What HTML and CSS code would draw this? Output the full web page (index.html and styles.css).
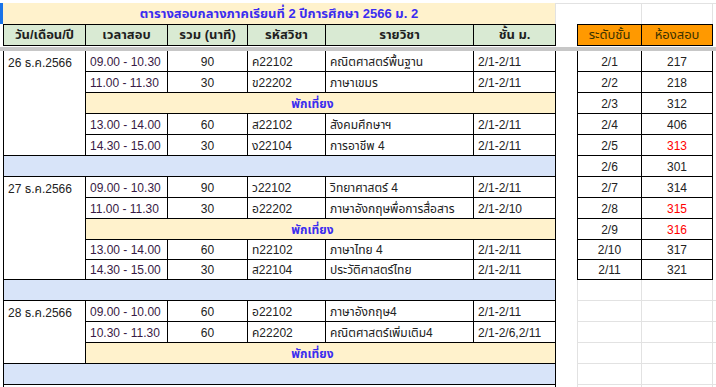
FILE: index.html
```html
<!DOCTYPE html>
<html lang="th">
<head>
<meta charset="utf-8">
<title>ตารางสอบกลางภาค</title>
<link rel="stylesheet" href="styles.css">
</head>
<body>
<div class="sheet">
  <div class="selbar"></div>
  <div class="band head-band">
    <table class="grid left">
      <colgroup><col class="c1"><col class="c2"><col class="c3"><col class="c4"><col class="c5"><col class="c6"></colgroup>
      <tr class="r-title"><td colspan="6" class="title">ตารางสอบกลางภาคเรียนที่ 2 ปีการศึกษา 2566 ม. 2</td></tr>
      <tr class="r-head">
        <th class="first">วัน/เดือน/ปี</th><th>เวลาสอบ</th><th>รวม (นาที)</th><th>รหัสวิชา</th><th>รายวิชา</th><th>ชั้น ม.</th>
      </tr>
    </table>
    <div class="gapcol"></div>
    <div class="rhead">
      <div class="rblank"><span class="g1"></span><span class="g2"></span><span class="g3"></span></div>
      <table class="grid right">
        <colgroup><col class="rc1"><col class="rc2"></colgroup>
        <tr class="r-head"><th class="first orange">ระดับชั้น</th><th class="orange">ห้องสอบ</th></tr>
      </table>
    </div>
  </div>
  <div class="freeze"></div>
  <div class="band body-band">
    <table class="grid left">
      <colgroup><col class="c1"><col class="c2"><col class="c3"><col class="c4"><col class="c5"><col class="c6"></colgroup>
      <tr class="h21"><td rowspan="5" class="first date">26 ธ.ค.2566</td><td class="time">09.00 - 10.30</td><td class="ctr">90</td><td>ค22102</td><td>คณิตศาสตร์พื้นฐาน</td><td>2/1-2/11</td></tr>
      <tr class="h21"><td class="time">11.00 - 11.30</td><td class="ctr">30</td><td>ข22202</td><td>ภาษาเขมร</td><td>2/1-2/11</td></tr>
      <tr class="h21"><td colspan="5" class="lunch">พักเที่ยง</td></tr>
      <tr class="h21"><td class="time">13.00 - 14.00</td><td class="ctr">60</td><td>ส22102</td><td>สังคมศึกษาฯ</td><td>2/1-2/11</td></tr>
      <tr class="h21"><td class="time">14.30 - 15.00</td><td class="ctr">30</td><td>ง22104</td><td>การอาชีพ 4</td><td>2/1-2/11</td></tr>
      <tr class="h21"><td colspan="6" class="first sep"></td></tr>
      <tr class="h21"><td rowspan="5" class="first date">27 ธ.ค.2566</td><td class="time">09.00 - 10.30</td><td class="ctr">90</td><td>ว22102</td><td>วิทยาศาสตร์ 4</td><td>2/1-2/11</td></tr>
      <tr class="h21"><td class="time">11.00 - 11.30</td><td class="ctr">30</td><td>อ22202</td><td>ภาษาอังกฤษพื่อการสื่อสาร</td><td>2/1-2/10</td></tr>
      <tr class="h21"><td colspan="5" class="lunch">พักเที่ยง</td></tr>
      <tr class="h20"><td class="time">13.00 - 14.00</td><td class="ctr">60</td><td>ท22102</td><td>ภาษาไทย 4</td><td>2/1-2/11</td></tr>
      <tr class="h20"><td class="time">14.30 - 15.00</td><td class="ctr">30</td><td>ส22104</td><td>ประวัติศาสตร์ไทย</td><td>2/1-2/11</td></tr>
      <tr class="h21"><td colspan="6" class="first sep"></td></tr>
      <tr class="h21"><td rowspan="3" class="first date">28 ธ.ค.2566</td><td class="time">09.00 - 10.00</td><td class="ctr">60</td><td>อ22102</td><td>ภาษาอังกฤษ4</td><td>2/1-2/11</td></tr>
      <tr class="h21"><td class="time">10.30 - 11.30</td><td class="ctr">60</td><td>ค22202</td><td>คณิตศาสตร์เพิ่มเติม4</td><td>2/1-2/6,2/11</td></tr>
      <tr class="h21"><td colspan="5" class="lunch">พักเที่ยง</td></tr>
      <tr class="h21"><td colspan="6" class="first sep"></td></tr>
      <tr class="h21"><td colspan="6" class="first"></td></tr>
    </table>
    <div class="gapcol"></div>
    <div class="rbody">
      <table class="grid right">
        <colgroup><col class="rc1"><col class="rc2"></colgroup>
        <tr class="h21"><td class="first ctr">2/1</td><td class="ctr">217</td></tr>
        <tr class="h21"><td class="first ctr">2/2</td><td class="ctr">218</td></tr>
        <tr class="h21"><td class="first ctr">2/3</td><td class="ctr">312</td></tr>
        <tr class="h21"><td class="first ctr">2/4</td><td class="ctr">406</td></tr>
        <tr class="h21"><td class="first ctr">2/5</td><td class="ctr red">313</td></tr>
        <tr class="h21"><td class="first ctr">2/6</td><td class="ctr">301</td></tr>
        <tr class="h21"><td class="first ctr">2/7</td><td class="ctr">314</td></tr>
        <tr class="h21"><td class="first ctr">2/8</td><td class="ctr red">315</td></tr>
        <tr class="h21"><td class="first ctr">2/9</td><td class="ctr red">316</td></tr>
        <tr class="h20"><td class="first ctr">2/10</td><td class="ctr">317</td></tr>
        <tr class="h20"><td class="first ctr">2/11</td><td class="ctr">321</td></tr>
      </table>
      <table class="filler">
        <colgroup><col class="rc1"><col class="rc2"><col class="rc3"></colgroup>
        <tr class="h21"><td></td><td></td><td></td></tr>
        <tr class="h21"><td></td><td></td><td></td></tr>
        <tr class="h21"><td></td><td></td><td></td></tr>
        <tr class="h21"><td></td><td></td><td></td></tr>
        <tr class="h21"><td></td><td></td><td></td></tr>
        <tr class="h21"><td></td><td></td><td></td></tr>
      </table>
    </div>
  </div>
</div>
</body>
</html>
```

FILE: styles.css
```css
* { box-sizing: border-box; }

body {
  margin: 0;
  background: #ffffff;
  font-family: "Liberation Sans", "Noto Sans Thai", "Noto Sans", sans-serif;
  font-size: 12px;
  color: #222222;
}

.sheet {
  position: relative;
  width: 716px;
  height: 387px;
  overflow: hidden;
  padding-top: 3px;
  background:
    linear-gradient(#e2e2e2, #e2e2e2) 0 3px / 100% 1px no-repeat;
}

.selbar {
  position: absolute;
  left: 0;
  top: 3px;
  width: 3px;
  height: 21px;
  background: #1a73e8;
}

.band {
  display: flex;
  align-items: flex-start;
  padding-left: 3px;
}

.gapcol { width: 21px; flex: none; }

.grid {
  border-collapse: separate;
  border-spacing: 0;
  table-layout: fixed;
  flex: none;
}

.grid.left { width: 553px; }
.grid.right { width: 136px; }

.c1 { width: 83px; }
.c2 { width: 82px; }
.c3 { width: 80px; }
.c4 { width: 78px; }
.c5 { width: 148px; }
.c6 { width: 82px; }

.rc1 { width: 65px; }
.rc2 { width: 71px; }
.rc3 { width: 20px; }

.grid td, .grid th {
  border-right: 1px solid #000;
  border-bottom: 1px solid #000;
  padding: 0 4px 2px;
  vertical-align: bottom;
  white-space: nowrap;
  overflow: hidden;
  font-weight: normal;
  line-height: 14px;
}

.grid .first { border-left: 1px solid #000; }

.r-title td { height: 21px; }

.title {
  background: #fff2cc;
  color: #3b2df0;
  font-weight: bold !important;
  font-size: 13px;
  text-align: center;
  border-right: 1px solid #e2e2e2 !important;
  border-bottom: 0 !important;
  vertical-align: middle !important;
  padding: 1px 0 0 !important;
}

.r-head th {
  height: 22px;
  border-top: 1px solid #000;
  background: #d9ead3;
  font-weight: bold;
  font-size: 13px;
  text-align: center;
  vertical-align: middle;
  padding: 0 4px;
  color: #1f1f1f;
}

.r-head th.orange {
  background: #ff9900;
  font-weight: normal;
  color: #3a3200;
}

.rhead { display: flex; flex-direction: column; flex: none; }

.rblank {
  display: flex;
  height: 21px;
}
.rblank span { height: 21px; border-right: 1px solid #e2e2e2; }
.rblank .g1 { width: 65px; }
.rblank .g2 { width: 71px; }
.rblank .g3 { width: 20px; border-right: 0; }

.freeze {
  height: 4px;
  margin-top: 1px;
  background: #c7c7c7;
}

.h21 td { height: 21px; }
.h20 td { height: 20px; }

.date { vertical-align: top !important; padding-top: 5px !important; }

.time { color: #381a45; }

.ctr { text-align: center; }

.lunch {
  background: #fff2cc;
  color: #3b2df0;
  font-weight: bold !important;
  text-align: center;
  padding-right: 20px !important;
}

.sep { background: #d8e4f9; }

.red { color: #ff0000; }

.rbody { display: flex; flex-direction: column; flex: none; }

.filler {
  border-collapse: separate;
  border-spacing: 0;
  table-layout: fixed;
  width: 156px;
}

.filler td {
  border-right: 1px solid #e2e2e2;
  border-bottom: 1px solid #e2e2e2;
  padding: 0;
}

.filler td:first-child { border-left: 1px solid #e2e2e2; }
```
